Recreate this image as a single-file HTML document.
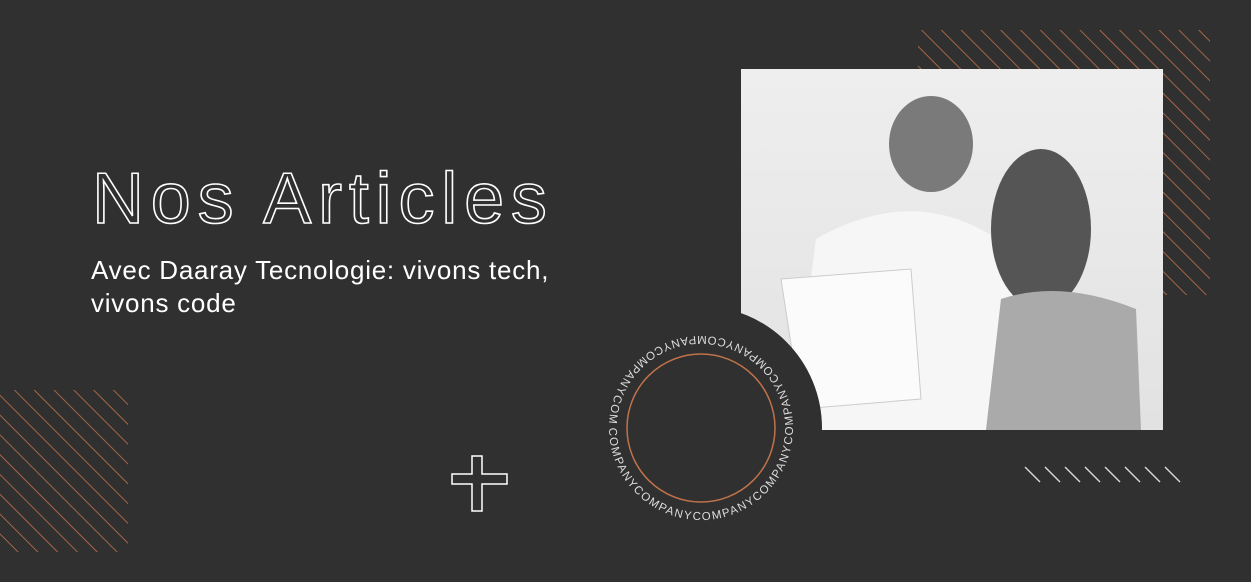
<!DOCTYPE html>
<html><head><style>
body{margin:0;width:1251px;height:582px;background:#303030;overflow:hidden;position:relative;font-family:"Liberation Sans",sans-serif}
.t{position:absolute;left:92px;top:158px;font-size:72px;color:transparent;-webkit-text-stroke:1.6px #fff;letter-spacing:6.8px;font-family:"Liberation Sans",sans-serif;font-weight:400}
.s{position:absolute;left:91px;top:254px;font-size:26px;color:#fff;line-height:33px;letter-spacing:0.75px}
.photo{position:absolute;left:741px;top:69px;width:422px;height:361px;background:linear-gradient(180deg,#eeeeee,#e2e2e2)}
</style></head><body>
<svg width="1251" height="582" style="position:absolute;left:0;top:0">
<defs>
<pattern id="st" width="14" height="14" patternUnits="userSpaceOnUse" patternTransform="rotate(-45)"><line x1="0" y1="0" x2="0" y2="14" stroke="#c0724a" stroke-width="1.6"/></pattern>
<clipPath id="c1"><polygon points="918,30 1210,30 1210,295 1163,295 1163,69 918,69"/></clipPath>
<path id="cp" d="M701,428 m-92,0 a92,92 0 1,0 184,0 a92,92 0 1,0 -184,0"/>
</defs>
<rect x="918" y="30" width="292" height="265" fill="url(#st)" clip-path="url(#c1)"/>
<rect x="0" y="390" width="128" height="162" fill="url(#st)"/>
<g stroke="#ddd" stroke-width="1.3">
<line x1="1025" y1="467" x2="1040" y2="482"/><line x1="1045" y1="467" x2="1060" y2="482"/><line x1="1065" y1="467" x2="1080" y2="482"/><line x1="1085" y1="467" x2="1100" y2="482"/><line x1="1105" y1="467" x2="1120" y2="482"/><line x1="1125" y1="467" x2="1140" y2="482"/><line x1="1145" y1="467" x2="1160" y2="482"/><line x1="1165" y1="467" x2="1180" y2="482"/>
</g>
</svg>
<div class="photo">
<svg width="422" height="361">
<ellipse cx="190" cy="75" rx="42" ry="48" fill="#7a7a7a"/>
<path d="M50,361 L75,170 Q180,110 270,180 L275,361Z" fill="#f6f6f6"/>
<ellipse cx="300" cy="160" rx="50" ry="80" fill="#555"/>
<path d="M245,361 L260,230 Q320,210 395,240 L400,361Z" fill="#aaa"/>
<path d="M40,210 L170,200 L180,330 L60,340Z" fill="#fbfbfb" stroke="#ccc"/>
</svg>
</div>
<svg width="1251" height="582" style="position:absolute;left:0;top:0">
<circle cx="700" cy="428" r="122" fill="#303030"/>
<circle cx="701" cy="428" r="74" fill="none" stroke="#c0724a" stroke-width="1.5"/>
<text font-size="11.5" fill="#ddd" letter-spacing="1.5" font-family="Liberation Sans"><textPath href="#cp">COMPANYCOMPANYCOMPANYCOMPANYCOMPANYCOMPANYCOMPANYCOMPANYCOMPA</textPath></text>
<path d="M472,456 h10 v18 h25 v10 h-25 v27 h-10 v-27 h-20 v-10 h20z" fill="none" stroke="#fff" stroke-width="1.5"/>
</svg>
<div class="t">Nos Articles</div>
<div class="s">Avec Daaray Tecnologie: vivons tech,<br>vivons code</div>
</body></html>
